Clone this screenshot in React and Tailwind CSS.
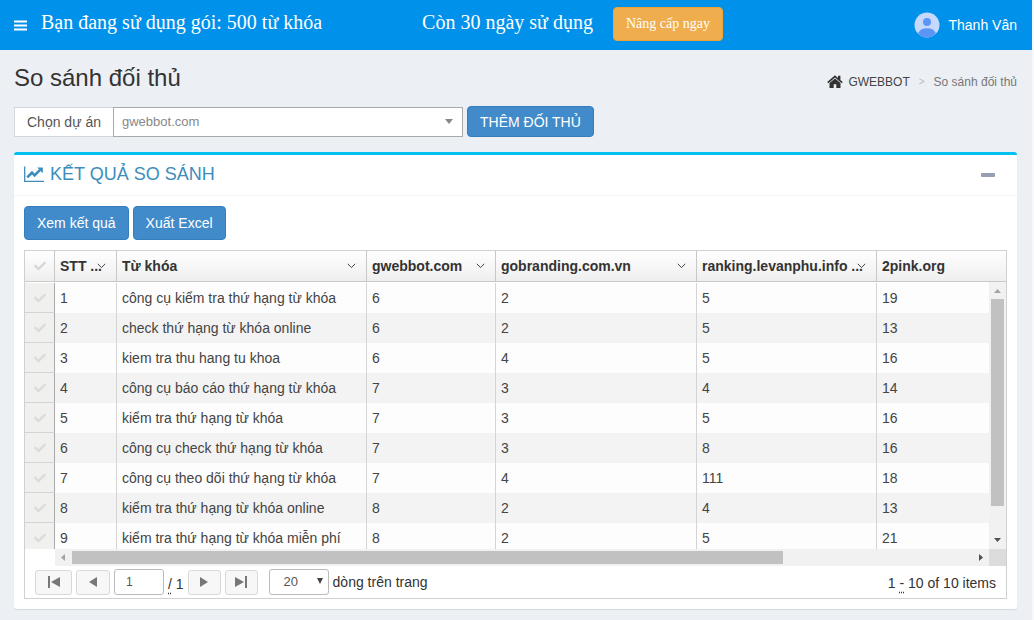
import clsx from "clsx";
import { FaCheck } from "react-icons/fa";

const ROWS = [
  ["công cụ kiểm tra thứ hạng từ khóa", 6, 2, 5, 19],
  ["check thứ hạng từ khóa online", 6, 2, 5, 13],
  ["kiem tra thu hang tu khoa", 6, 4, 5, 16],
  ["công cụ báo cáo thứ hạng từ khóa", 7, 3, 4, 14],
  ["kiểm tra thứ hạng từ khóa", 7, 3, 5, 16],
  ["công cụ check thứ hạng từ khóa", 7, 3, 8, 16],
  ["công cụ theo dõi thứ hạng từ khóa", 7, 4, 111, 18],
  ["kiểm tra thứ hạng từ khóa online", 8, 2, 4, 13],
  ["kiểm tra thứ hạng từ khóa miễn phí", 8, 2, 5, 21],
];

const COLUMNS = [
  { name: "STT ...", menu: true },
  { name: "Từ khóa", menu: true },
  { name: "gwebbot.com", menu: true },
  { name: "gobranding.com.vn", menu: true },
  { name: "ranking.levanphu.info ...", menu: true },
  { name: "2pink.org", menu: false },
];

function MenuIcon() {
  return (
    <svg viewBox="0 0 13 11" className="h-[11px] w-[13px]" fill="#fff" aria-hidden="true">
      <path d="M0 0.5 H13 V2.500 H0 Z M0 4.500 H13 V6.500 H0 Z M0 8.500 H13 V10.500 H0 Z" />
    </svg>
  );
}

function HomeIcon() {
  return (
    <svg viewBox="0 0 16 14" className="h-[14px] w-4" fill="#333" aria-hidden="true">
      <path d="M8 0.3 L0.2 7 L1.3 8.2 L8 2.5 L14.7 8.2 L15.8 7 L13.4 4.9 V0.8 H11 V2.9 Z" />
      <path d="M8 3.4 L2.500 8 V12.4 Q2.500 13 3.1 13 H6.7 V9.2 H9.3 V13 H12.9 Q13.500 13 13.500 12.4 V8 Z" />
    </svg>
  );
}

function ChartIcon() {
  return (
    <svg viewBox="0 0 20 16" className="h-4 w-5" aria-hidden="true">
      <path d="M0.7 0.5 V15.3 H20" fill="none" stroke="#3c8dbc" strokeWidth="1.3" />
      <path d="M3.2 11.4 L8 6.7 L10.6 9.3 L16 3.9" fill="none" stroke="#3c8dbc" strokeWidth="2.6" />
      <path d="M13.2 1.6 H18.8 V7.2 Z" fill="#3c8dbc" />
    </svg>
  );
}

function Avatar() {
  return (
    <svg viewBox="0 0 26 26" className="size-[26px]" aria-hidden="true">
      <clipPath id="avatar-clip">
        <circle cx="13" cy="13" r="12.5" />
      </clipPath>
      <circle cx="13" cy="13" r="12.5" fill="#c6d8fb" />
      <g clipPath="url(#avatar-clip)" fill="#5c96f5">
        <circle cx="13" cy="10" r="4" />
        <path d="M4.5 26 V20.5 Q6.5 16.2 13 16.2 Q19.500 16.2 21.500 20.5 V26 Z" />
      </g>
    </svg>
  );
}

function Chevron() {
  return (
    <svg viewBox="0 0 9 6" className="h-[6px] w-[9px] shrink-0" fill="none" stroke="#444" aria-hidden="true">
      <path d="M0.8 0.8 L4.500 4.6 L8.2 0.8" />
    </svg>
  );
}

function PagerButton({ label, className, children }) {
  return (
    <button
      type="button"
      aria-label={label}
      className={clsx(
        "flex h-[25px] items-center justify-center rounded-[3px] border border-[#d9d9d9] bg-[#f7f7f7]",
        className
      )}
    >
      <svg viewBox="0 0 14 12" className="h-3 w-[14px]" fill="#777" aria-hidden="true">
        {children}
      </svg>
    </button>
  );
}

function ActionButton({ children, className }) {
  return (
    <button
      type="button"
      className={clsx("rounded border border-[#357ebd] bg-[#428bca] px-3 text-sm text-white", className)}
    >
      {children}
    </button>
  );
}

function TopBar() {
  return (
    <header className="flex h-[50px] items-center bg-[#0091ea] pr-[15px] pl-[14px] text-white">
      <button type="button" aria-label="Menu">
        <MenuIcon />
      </button>
      <div className="flex items-center pb-[2px] pl-[14px] font-['Liberation_Serif',serif] whitespace-nowrap">
        <div className="pb-1 text-xl">
          <span>Bạn đang sử dụng gói: 500 từ khóa</span>
          <span className="pl-[100px]">Còn 30 ngày sử dụng</span>
        </div>
        <button type="button" className="ml-5 h-[34px] rounded border border-[#eea236] bg-[#f0ad4e] px-3 text-sm">
          Nâng cấp ngay
        </button>
      </div>
      <a href="#" className="ml-auto flex items-center gap-[9px] text-sm whitespace-nowrap">
        <Avatar />
        Thanh Vân
      </a>
    </header>
  );
}

function Grid() {
  return (
    <div className="relative h-[298px] overflow-hidden">
      <table className="w-full table-fixed border-separate border-spacing-0 text-left text-sm">
        <colgroup>
          <col className="w-[30px]" />
          <col className="w-[62px]" />
          <col className="w-[250px]" />
          <col className="w-[129px]" />
          <col className="w-[201px]" />
          <col className="w-[180px]" />
          <col />
        </colgroup>
        <thead>
          <tr className="h-[31px] bg-linear-to-b from-white to-[#eee]">
            <th className="border-r border-b border-[#c8c8c8] p-0">
              <FaCheck className="mx-auto size-3 text-[#d8d8d8]" title="Chọn tất cả" />
            </th>
            {COLUMNS.map((col, i) => (
              <th
                key={col.name}
                className={clsx(
                  "border-b border-[#c8c8c8] py-0 pr-[10px] pl-[5px] font-bold whitespace-nowrap",
                  i < COLUMNS.length - 1 && "border-r"
                )}
              >
                <div className="flex items-center justify-between">
                  <span className="min-w-0">{col.name}</span>
                  {col.menu && <Chevron />}
                </div>
              </th>
            ))}
          </tr>
        </thead>
        <tbody className="border-t border-white text-[#444] before:block before:h-px">
          {ROWS.map((row, i) => (
            <tr key={row[0]} className="h-[30px] odd:bg-[#fdfdfd] even:bg-[#f3f3f3]">
              <td className="border-r border-b border-r-[#aaa] border-b-[#d4d4d4] bg-[#f0f0ee] p-0">
                <FaCheck className="mx-auto size-3 text-[#dcdcdc]" />
              </td>
              {[i + 1, ...row].map((value, j) => (
                <td
                  key={j}
                  className={clsx(
                    "border-[#d4d4d4] py-0 pl-[5px] whitespace-nowrap",
                    j < row.length && "border-r"
                  )}
                >
                  {value}
                </td>
              ))}
            </tr>
          ))}
        </tbody>
      </table>

      {/* Vertical scrollbar */}
      <div className="absolute top-[31px] right-0 bottom-0 flex w-[17px] flex-col items-center bg-[#f1f1f1]">
        <svg viewBox="0 0 17 17" className="size-[17px]" fill="#a3a3a3" aria-hidden="true">
          <path d="M5 11 L8.500 7 L12 11 Z" />
        </svg>
        <div className="h-[207px] w-[13px] bg-[#c1c1c1]" />
        <svg viewBox="0 0 17 17" className="mt-auto size-[17px]" fill="#505050" aria-hidden="true">
          <path d="M5 6 L8.500 10 L12 6 Z" />
        </svg>
      </div>
    </div>
  );
}

function HorizontalScrollbar() {
  return (
    <div className="flex h-[17px] pl-[30px]">
      <div className="flex flex-1 items-center bg-[#f1f1f1]">
        <svg viewBox="0 0 17 17" className="size-[17px]" fill="#a3a3a3" aria-hidden="true">
          <path d="M10 5 L6 8.500 L10 12 Z" />
        </svg>
        <div className="flex-1">
          <div className="h-[13px] w-[79%] bg-[#c1c1c1]" />
        </div>
        <svg viewBox="0 0 17 17" className="size-[17px]" fill="#505050" aria-hidden="true">
          <path d="M7 5 L11 8.500 L7 12 Z" />
        </svg>
      </div>
      <div className="w-[17px] bg-[#dcdcdc]" />
    </div>
  );
}

function Pager() {
  return (
    <div className="flex h-8 items-center px-[10px] text-sm">
      <PagerButton label="Trang đầu" className="w-[37px]">
        <path d="M1 0 H3 V12 H1 Z M13 1 V11 L4 6 Z" />
      </PagerButton>
      <PagerButton label="Trang trước" className="ml-1 w-[34px]">
        <path d="M11 1 V11 L3 6 Z" />
      </PagerButton>
      <input
        aria-label="Trang"
        defaultValue="1"
        className="ml-1 h-[26px] w-[50px] rounded-[3px] border border-[#bbb] bg-white pl-[11px] text-xs text-[#555]"
      />
      <span className="px-1 pt-1 whitespace-nowrap">
        <abbr title="of" className="underline decoration-dotted underline-offset-4">/</abbr> 1
      </span>
      <PagerButton label="Trang sau" className="w-[33px]">
        <path d="M3 1 V11 L11 6 Z" />
      </PagerButton>
      <PagerButton label="Trang cuối" className="ml-1 w-[33px]">
        <path d="M1 1 V11 L10 6 Z M11 0 H13 V12 H11 Z" />
      </PagerButton>
      <div className="relative ml-[11px]">
        <select
          id="page-size"
          className="block h-[26px] w-[60px] appearance-none rounded-[3px] border border-[#bbb] bg-white pl-[14px] text-[13px] text-[#555]"
        >
          <option>20</option>
        </select>
        <svg viewBox="0 0 6 6" className="pointer-events-none absolute top-[9px] right-[6px] size-[6px]" fill="#444" aria-hidden="true">
          <path d="M0 0 H6 L3 6 Z" />
        </svg>
      </div>
      <label htmlFor="page-size" className="pl-1 whitespace-nowrap">
        dòng trên trang
      </label>
      <span className="ml-auto pt-[2px] whitespace-nowrap">
        1 <abbr title="through" className="underline decoration-dotted underline-offset-4">-</abbr> 10 of 10 items
      </span>
    </div>
  );
}

export default function App() {
  return (
    <div className="min-h-screen border-r-2 border-[#f6f8fb] bg-[#ecf0f5] pb-[11px] font-['Liberation_Sans',Arial,sans-serif] text-[#333]">
      <TopBar />

      <main className="pr-[15px] pl-[14px]">
        <div className="flex items-center justify-between pt-3">
          <h1 className="text-2xl leading-8">So sánh đối thủ</h1>
          <nav aria-label="Breadcrumb" className="flex items-center pt-[7px] text-xs">
            <a href="#" className="flex items-center gap-[5px] text-[#444]">
              <HomeIcon />
              GWEBBOT
            </a>
            <span className="px-[9px] text-[10px] text-[#bbb]">&gt;</span>
            <span className="text-[#777]">So sánh đối thủ</span>
          </nav>
        </div>

        {/* Project picker */}
        <div className="flex items-center pt-3">
          <label
            htmlFor="project"
            className="flex h-[30px] items-center border border-r-0 border-[#d2d6de] bg-white px-3 text-sm text-[#555]"
          >
            Chọn dự án
          </label>
          <div className="relative">
            <select
              id="project"
              className="block h-[30px] w-[350px] appearance-none border border-[#aaa] bg-white pl-2 text-[13px] text-[#888]"
            >
              <option>gwebbot.com</option>
            </select>
            <svg viewBox="0 0 8 5" className="pointer-events-none absolute top-[12px] right-[10px] h-[5px] w-2" fill="#888" aria-hidden="true">
              <path d="M0 0 H8 L4 5 Z" />
            </svg>
          </div>
          <ActionButton className="ml-1 h-[31px]">THÊM ĐỐI THỦ</ActionButton>
        </div>

        {/* Results */}
        <section className="mt-[15px] rounded-[3px] border-t-[3px] border-[#00c0ef] bg-white shadow-[0_1px_1px_rgba(0,0,0,0.1)]">
          <div className="flex h-[41px] items-center justify-between border-b border-[#f4f4f4] pr-[22px] pl-[10px]">
            <h2 className="flex items-center gap-[6px] pb-[2px] text-lg text-[#3c8dbc]">
              <ChartIcon />
              KẾT QUẢ SO SÁNH
            </h2>
            <button type="button" aria-label="Thu gọn" className="py-2">
              <span className="block h-1 w-[14px] rounded-[1px] bg-[#97a0b3]" />
            </button>
          </div>
          <div className="p-[10px]">
            <div className="flex gap-1">
              <ActionButton className="h-[34px]">Xem kết quả</ActionButton>
              <ActionButton className="h-[34px]">Xuất Excel</ActionButton>
            </div>
            <div className="mt-[10px] border border-[#d0d0d0]">
              <Grid />
              <HorizontalScrollbar />
              <Pager />
            </div>
          </div>
        </section>
      </main>
    </div>
  );
}
